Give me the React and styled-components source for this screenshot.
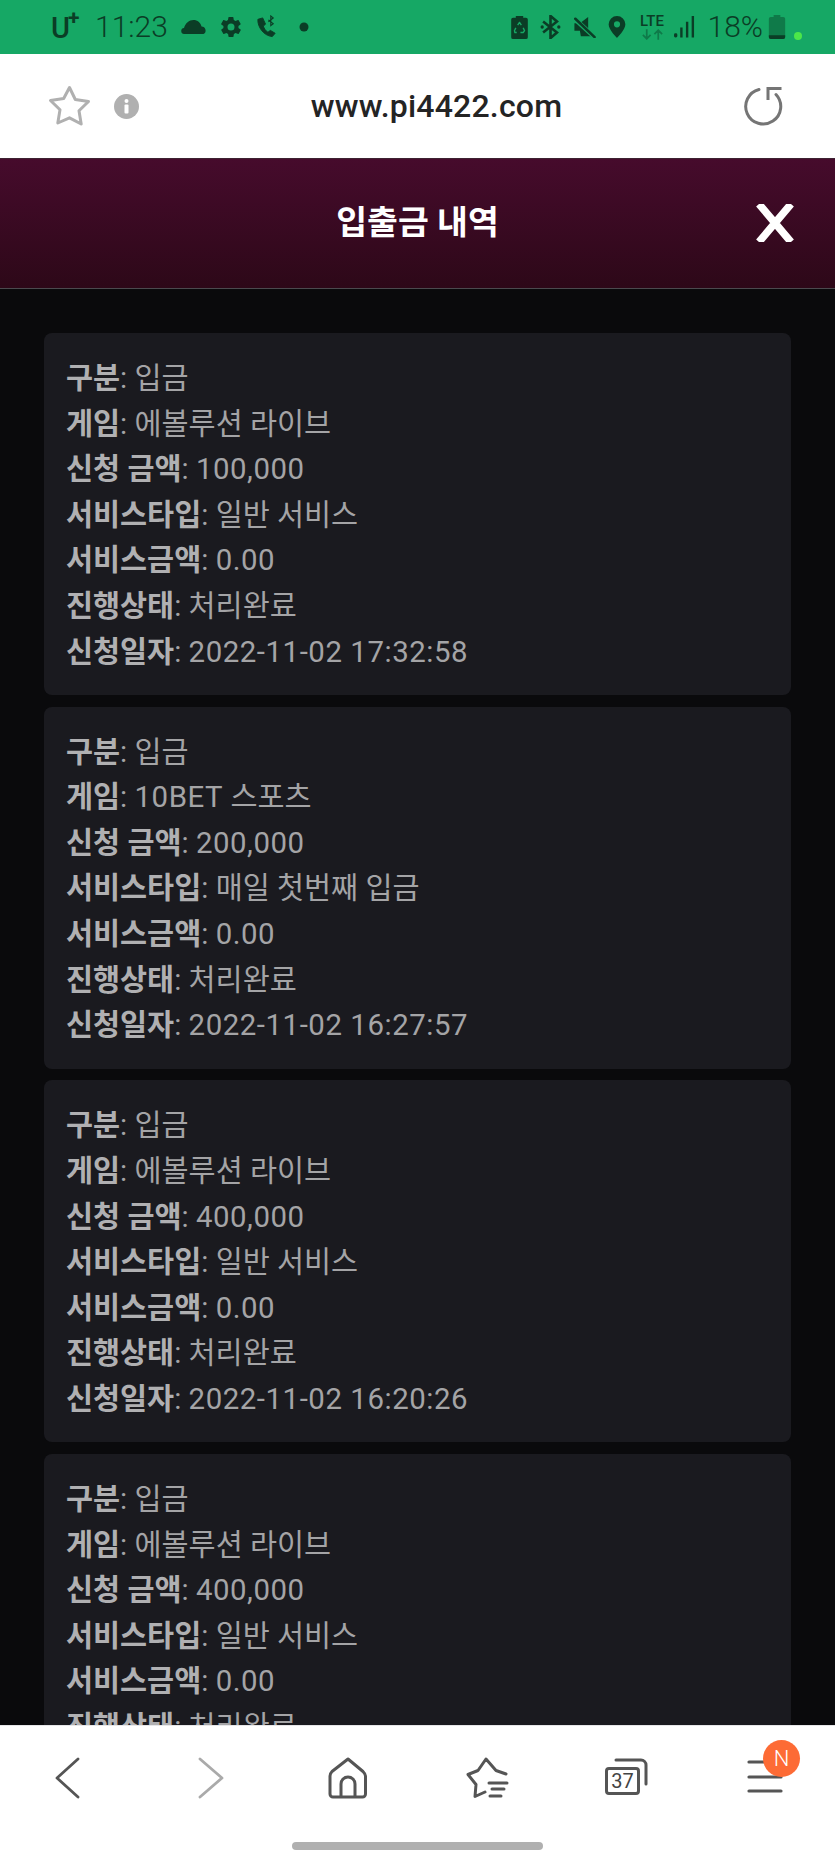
import React from "react";
import styled, { createGlobalStyle } from "styled-components";

const GlobalStyle = createGlobalStyle`
  html, body {
    margin: 0;
    padding: 0;
    background: #0a0a0c;
  }
  * {
    box-sizing: border-box;
  }
`;

const FONT = `Roboto, "Noto Sans CJK KR", sans-serif`;

const Page = styled.div`
  width: 835px;
  height: 1862px;
  display: flex;
  flex-direction: column;
  overflow: hidden;
  font-family: ${FONT};
`;

const StatusBar = styled.div`
  height: 54px;
  flex: none;
  background: #16a865;
  color: #0b3d26;
  display: flex;
  align-items: center;
  justify-content: space-between;
  padding: 0 33px 0 51px;
`;

const StatusGroup = styled.div`
  display: flex;
  align-items: center;
  gap: ${(p) => p.$gap || 0}px;
  margin-left: ${(p) => p.$left || 0}px;
`;

const Carrier = styled.span`
  font-size: 29px;
  font-weight: 500;
  position: relative;
  top: 1px;
  width: 32px;
`;

const Plus = styled.sup`
  position: absolute;
  left: 17px;
  top: -3px;
  font-size: 21px;
  font-weight: 700;
  line-height: 1;
`;

const StatusText = styled.span`
  font-size: 30px;
  font-weight: 300;
  line-height: 1;
  margin-left: ${(p) => p.$left || 0}px;
`;

const AddressBar = styled.div`
  height: 104px;
  flex: none;
  background: #fff;
  display: grid;
  grid-template-columns: 170px 1fr 170px;
  align-items: center;
  padding: 0 52px 0 48px;
`;

const AddressLeft = styled.div`
  display: flex;
  align-items: center;
  gap: 22px;
`;

const AddressRight = styled.div`
  display: flex;
  justify-content: flex-end;
`;

const Url = styled.div`
  text-align: center;
  font-size: 32px;
  font-weight: 500;
  color: #242424;
  letter-spacing: 0.2px;
  padding-left: 42px;
  white-space: nowrap;
`;

const Header = styled.header`
  height: 131px;
  flex: none;
  background: linear-gradient(#460b2c, #2d0818);
  border-bottom: 1px solid #4b4a4e;
  border-top: 1px solid #3d2232;
  display: flex;
  align-items: center;
  justify-content: center;
  position: relative;
`;

const Title = styled.h1`
  margin: 0 0 9px;
  font-size: 33.5px;
  font-weight: 700;
  color: #fff;
`;

const CloseButton = styled.div`
  position: absolute;
  right: 41px;
  top: 45px;
  width: 38px;
  height: 38px;
`;

const Content = styled.main`
  flex: 1;
  min-height: 0;
  overflow: hidden;
  background: #0a0a0c;
  padding: 44px 44px 0;
  display: flex;
  flex-direction: column;
  gap: 11.7px;
`;

const Card = styled.section`
  flex: none;
  background: #1a1a1f;
  border-radius: 8px;
  padding: 23px 22px 0;
  height: 362px;
`;

const Line = styled.div`
  font-size: 29.4px;
  line-height: 45.6px;
  color: #a4a4a6;
  white-space: nowrap;
`;

const Label = styled.b`
  font-weight: 700;
  color: #b0b0b2;
`;

const Numeric = styled.span`
  letter-spacing: 0.55px;
`;

const BottomBar = styled.nav`
  height: 137px;
  flex: none;
  background: #fff;
  border-top: 1px solid #e6e6e8;
  position: relative;
  display: grid;
  grid-template-columns: 144px 137px 139px 140px 138px 54px;
  align-items: start;
  padding: 26px 0 0 40px;
`;

const NavIcon = styled.div`
  width: 54px;
  height: 54px;
  position: relative;
`;

const Badge = styled.div`
  position: absolute;
  top: -12px;
  left: 25px;
  width: 37px;
  height: 37px;
  border-radius: 50%;
  background: #fd6b35;
  color: #fff;
  font-size: 22px;
  font-weight: 300;
  display: flex;
  align-items: center;
  justify-content: center;
`;

const HomeIndicator = styled.div`
  position: absolute;
  left: 292px;
  bottom: 12px;
  width: 251px;
  height: 8px;
  border-radius: 4px;
  background: #b0b0b0;
`;

const Cloud = () => (
  <svg width="26" height="18" viewBox="0 0 26 18" fill="#0b3d26">
    <path d="M3.500 16a3 3 0 0 1-.5-6C4.500 5 8 2 12.500 2c4 0 7 2.500 8 6.500A4 4 0 0 1 22.500 16z" />
  </svg>
);

const Gear = () => (
  <svg width="24" height="24" viewBox="0 0 24 24" fill="#0b3d26">
    <path fillRule="evenodd" d="M19.400 13c.1-.3.1-.7.1-1s0-.7-.1-1l2.100-1.600c.2-.2.2-.4.1-.6l-2-3.500c-.1-.2-.4-.3-.6-.2l-2.500 1c-.5-.4-1.100-.7-1.700-1l-.4-2.600c0-.3-.2-.5-.5-.5h-4c-.3 0-.5.200-.5.500l-.4 2.600c-.6.300-1.200.6-1.700 1l-2.500-1c-.2-.1-.5 0-.6.200l-2 3.500c-.1.200-.1.400.1.600L4.500 11c-.1.300-.1.700-.1 1s0 .7.1 1l-2.100 1.600c-.2.200-.2.400-.1.600l2 3.500c.1.200.4.300.6.200l2.500-1c.5.400 1.100.7 1.700 1l.4 2.600c0 .3.200.5.500.5h4c.3 0 .5-.2.5-.5l.4-2.600c.6-.3 1.200-.6 1.700-1l2.500 1c.2.1.5 0 .6-.2l2-3.500c.1-.2.1-.4-.1-.6zM12 15.500a3.500 3.500 0 1 1 0-7 3.500 3.500 0 0 1 0 7z" />
  </svg>
);

const CallBluetooth = () => (
  <svg width="23" height="25" viewBox="0 0 24 26" fill="none" stroke="#0b3d26">
    <path d="M3 4.500c-.5 8 6 17 15 18l3-3.500-5-3-2.500 2c-2.500-1.500-4-4-4.800-6.500L11 9.500 8 3z" fill="#0b3d26" strokeWidth="1" strokeLinejoin="round" />
    <path d="M14 5l5 4-2.500 2V1l2.500 2-5 4" strokeWidth="1.200" />
  </svg>
);

const Dot = () => (
  <svg width="10" height="10" viewBox="0 0 10 10">
    <circle cx="5" cy="5" r="4.500" fill="#0b3d26" />
  </svg>
);

const RecycleBattery = () => (
  <svg width="17" height="24" viewBox="0 0 18 26">
    <path d="M5 1h8v2h3a2 2 0 0 1 2 2v19a2 2 0 0 1-2 2H2a2 2 0 0 1-2-2V5a2 2 0 0 1 2-2h3z" fill="#0b3d26" />
    <path d="M7 11l2-3 2 3M13 14l1.500 3-1.500 2h-3M6 19H4l-.5-2L5 14" stroke="#16a865" strokeWidth="1.500" strokeLinejoin="round" fill="none" />
  </svg>
);

const Bluetooth = () => (
  <svg width="21" height="24" viewBox="0 0 22 26" fill="none" stroke="#0b3d26" strokeWidth="2.800">
    <path d="M3 7l15 12-7 6V1l7 6L3 19" />
    <circle cx="2" cy="13" r="1.800" fill="#0b3d26" stroke="none" />
    <circle cx="20" cy="13" r="1.800" fill="#0b3d26" stroke="none" />
  </svg>
);

const Muted = () => (
  <svg width="23" height="22" viewBox="0 0 24 24">
    <path d="M1 8h6l9-7v15l4 6H8l-1-6H1z" fill="#0b3d26" />
    <path d="M1 3l22 20" stroke="#16a865" strokeWidth="5" />
    <path d="M2 3l21 20" stroke="#0b3d26" strokeWidth="2.800" strokeLinecap="round" />
  </svg>
);

const Pin = () => (
  <svg width="18" height="22" viewBox="0 0 20 25">
    <path fillRule="evenodd" d="M10 0a9.500 9.500 0 0 1 9.500 9.500C19.500 16 10 25 10 25S.5 16 .5 9.500A9.500 9.500 0 0 1 10 0zm0 6a3.500 3.500 0 1 0 0 7 3.500 3.500 0 0 0 0-7z" fill="#0b3d26" />
  </svg>
);

const Lte = styled.div`
  width: 25px;
  margin: 0 -3px 0 2px;
  color: #0b3d26;
  font-size: 15px;
  font-weight: 500;
  line-height: 13px;
  text-align: center;
`;

const ArrowsSvg = styled.svg`
  display: block;
  margin-top: 1px;
`;

const LteArrows = () => (
  <ArrowsSvg width="25" height="11" viewBox="0 0 26 11" fill="none" stroke="#0f7a49" strokeWidth="1.800">
    <path d="M7 0v10M3 6l4 4 4-4M19 11V1M15 5l4-4 4 4" />
  </ArrowsSvg>
);

const Signal = () => (
  <svg width="21" height="22" viewBox="0 0 22 23" fill="#0b3d26">
    <rect x="0" y="18" width="3.500" height="4.500" rx="1.500" />
    <rect x="6.500" y="12" width="2.500" height="10.500" />
    <rect x="12.500" y="6" width="2.500" height="16.500" />
    <rect x="18.500" y="0" width="2.500" height="22.500" />
  </svg>
);

const BatterySvg = styled.svg`
  margin-left: 5px;
`;

const Battery = () => (
  <BatterySvg width="18" height="24" viewBox="0 0 17 25">
    <path d="M5 0h7v2h3a2 2 0 0 1 2 2v19a2 2 0 0 1-2 2H2a2 2 0 0 1-2-2V4a2 2 0 0 1 2-2h3z" fill="#0f7a49" />
    <path d="M0 21h17v2a2 2 0 0 1-2 2H2a2 2 0 0 1-2-2z" fill="#0b3d26" />
  </BatterySvg>
);

const GreenDot = styled.div`
  width: 8px;
  height: 8px;
  border-radius: 50%;
  background: #4ce64a;
  margin: 18px 0 0 8px;
`;

const StarOutline = () => (
  <svg width="44" height="42" viewBox="0 0 44 42" fill="none" stroke="#b0b0b0" strokeWidth="3" strokeLinejoin="round">
    <path d="M21.500 2.500l5.800 12 13.200 2-9.500 9.300 2.200 13.200-11.700-6.200L9.800 38l2.200-13.200-9.500-9.300 13.200-2z" />
  </svg>
);

const InfoIcon = () => (
  <svg width="25" height="25" viewBox="0 0 25 25">
    <circle cx="12.500" cy="12.500" r="12.500" fill="#b0b0b0" />
    <circle cx="12.500" cy="7" r="2" fill="#fff" />
    <rect x="10.500" y="10.500" width="4" height="9" rx="1" fill="#fff" />
  </svg>
);

const Reload = () => (
  <svg width="40" height="40" viewBox="0 0 40 40" fill="none" stroke="#757575" strokeWidth="3">
    <path d="M16 3.500A17.500 17.500 0 1 0 33 8.500" strokeLinecap="round" />
    <path d="M25 14V2.500H38.500" />
  </svg>
);

const CloseIcon = () => (
  <svg width="38" height="38" viewBox="0 0 38 38" stroke="#fff" strokeWidth="7.500">
    <path d="M3 0l32 38M35 0L3 38" />
  </svg>
);

const BackIcon = () => (
  <svg width="54" height="54" viewBox="0 0 54 54" fill="none" stroke="#555" strokeWidth="2.800" strokeLinecap="round" strokeLinejoin="round">
    <path d="M38 7L17 26l21 19" />
  </svg>
);

const ForwardIcon = () => (
  <svg width="54" height="54" viewBox="0 0 54 54" fill="none" stroke="#aaa" strokeWidth="2.800" strokeLinecap="round" strokeLinejoin="round">
    <path d="M16 7l22 19-22 19" />
  </svg>
);

const HomeIcon = () => (
  <svg width="54" height="54" viewBox="0 0 54 54" fill="none" stroke="#555" strokeWidth="3" strokeLinejoin="round">
    <path d="M12 45a3 3 0 0 1-3-3V24c0-2 .5-3 2-4.500L27 7l15 12.500c1.500 1.500 2.500 2.500 2.500 4.500v18a3 3 0 0 1-3 3z" />
    <path d="M20 45V32a7 7 0 0 1 14 0v13" />
  </svg>
);

const BookmarkIcon = () => (
  <svg width="54" height="54" viewBox="0 0 54 54" fill="none" stroke="#555" strokeWidth="3" strokeLinecap="round" strokeLinejoin="round">
    <path d="M46 22l-10-3.500L26 7l-8 11.500-10 4 8 10-1 12 10-4.500" />
    <path d="M29 31h18M32 37h12M30 44h11" />
  </svg>
);

const TabsFront = styled.div`
  position: absolute;
  left: 5px;
  top: 15px;
  width: 35px;
  height: 28px;
  border: 3px solid #555;
  border-radius: 4px;
  color: #444;
  font-size: 20px;
  font-weight: 400;
  line-height: 22px;
  text-align: center;
`;

const TabsBack = () => (
  <svg width="54" height="54" viewBox="0 0 54 54" fill="none" stroke="#555" strokeWidth="3" strokeLinecap="round">
    <path d="M16 8h25a5 5 0 0 1 5 5v19" />
  </svg>
);

const MenuIcon = () => (
  <svg width="54" height="54" viewBox="0 0 54 54" fill="none" stroke="#555" strokeWidth="3.200" strokeLinecap="round">
    <path d="M11 10h32M11 25h32M11 39h32" />
  </svg>
);

const records = [
  { game: "에볼루션 라이브", amount: "100,000", service: "일반 서비스", date: "2022-11-02 17:32:58" },
  { game: <><Numeric>10BET</Numeric> 스포츠</>, amount: "200,000", service: "매일 첫번째 입금", date: "2022-11-02 16:27:57" },
  { game: "에볼루션 라이브", amount: "400,000", service: "일반 서비스", date: "2022-11-02 16:20:26" },
  { game: "에볼루션 라이브", amount: "400,000", service: "일반 서비스", date: "2022-11-02 16:20:26" },
];

const App = () => {
  return (
    <Page>
      <GlobalStyle />
      <StatusBar>
        <StatusGroup>
          <Carrier>U<Plus>+</Plus></Carrier>
          <StatusText $left={12}>11:23</StatusText>
          <StatusGroup $gap={12} $left={13}>
            <Cloud />
            <Gear />
            <CallBluetooth />
          </StatusGroup>
          <StatusGroup $left={21}>
            <Dot />
          </StatusGroup>
        </StatusGroup>
        <StatusGroup>
          <StatusGroup $gap={12}>
            <RecycleBattery />
            <Bluetooth />
            <Muted />
            <Pin />
            <Lte>LTE<LteArrows /></Lte>
            <Signal />
          </StatusGroup>
          <StatusText $left={13}>18%</StatusText>
          <Battery />
          <GreenDot />
        </StatusGroup>
      </StatusBar>

      <AddressBar>
        <AddressLeft>
          <StarOutline />
          <InfoIcon />
        </AddressLeft>
        <Url>www.pi4422.com</Url>
        <AddressRight>
          <Reload />
        </AddressRight>
      </AddressBar>

      <Header>
        <Title>입출금 내역</Title>
        <CloseButton>
          <CloseIcon />
        </CloseButton>
      </Header>

      <Content>
        {records.map((r, i) => (
          <Card key={i}>
            <Line><Label>구분</Label>: 입금</Line>
            <Line><Label>게임</Label>: {r.game}</Line>
            <Line><Label>신청 금액</Label>: <Numeric>{r.amount}</Numeric></Line>
            <Line><Label>서비스타입</Label>: {r.service}</Line>
            <Line><Label>서비스금액</Label>: <Numeric>0.00</Numeric></Line>
            <Line><Label>진행상태</Label>: 처리완료</Line>
            <Line><Label>신청일자</Label>: <Numeric>{r.date}</Numeric></Line>
          </Card>
        ))}
      </Content>

      <BottomBar>
        <NavIcon><BackIcon /></NavIcon>
        <NavIcon><ForwardIcon /></NavIcon>
        <NavIcon><HomeIcon /></NavIcon>
        <NavIcon><BookmarkIcon /></NavIcon>
        <NavIcon>
          <TabsBack />
          <TabsFront>37</TabsFront>
        </NavIcon>
        <NavIcon>
          <MenuIcon />
          <Badge>N</Badge>
        </NavIcon>
        <HomeIndicator />
      </BottomBar>
    </Page>
  );
};

export default App;
